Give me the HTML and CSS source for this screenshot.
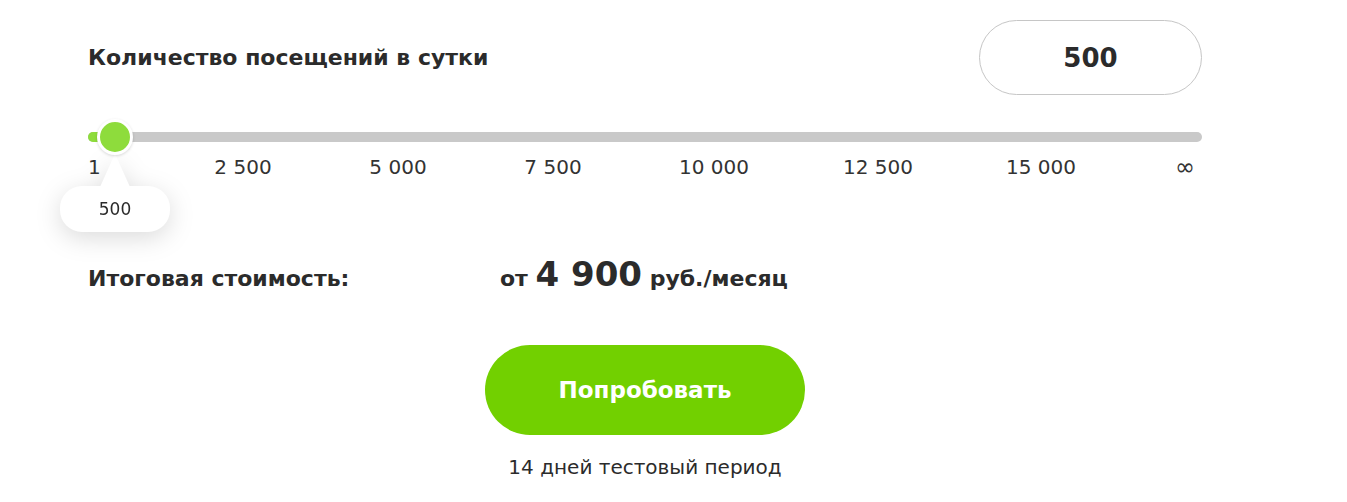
FILE: index.html
```html
<!DOCTYPE html>
<html lang="ru">
<head>
<meta charset="utf-8">
<link rel="stylesheet" href="styles.css">
</head>
<body>
<div class="calc">
  <div class="head">
    <div class="title">Количество посещений в сутки</div>
    <div class="count">500</div>
  </div>
  <div class="slider">
    <div class="track"><div class="fill" style="width:27px"></div></div>
    <div class="thumb" style="left:27px"></div>
    <div class="tip" style="left:27px">500</div>
    <div class="ticks">
      <span class="tick first">1</span>
      <span class="tick" style="left:155px">2 500</span>
      <span class="tick" style="left:310px">5 000</span>
      <span class="tick" style="left:465px">7 500</span>
      <span class="tick" style="left:626px">10 000</span>
      <span class="tick" style="left:790px">12 500</span>
      <span class="tick" style="left:953px">15 000</span>
      <span class="tick last">∞</span>
    </div>
  </div>
  <div class="total">
    <div class="total-label">Итоговая стоимость:</div>
    <div class="price">от <span class="big">4 900</span> руб./месяц</div>
  </div>
  <div class="cta">
    <button class="btn">Попробовать</button>
    <div class="trial">14 дней тестовый период</div>
  </div>
</div>
</body>
</html>
```
FILE: styles.css
```css
* { box-sizing: border-box; }
html, body { margin: 0; padding: 0; background: #fff; }
body { font-family: "DejaVu Sans", "Open Sans", sans-serif; color: #2b2b2b; }
.calc { width: 1114px; margin-left: 88px; padding-top: 20px; }
.head { display: flex; justify-content: space-between; align-items: center; height: 75px; }
.title { font-size: 22px; font-weight: 700; }
.count { width: 223px; height: 75px; border: 1px solid #c6c6c6; border-radius: 38px; display: flex; align-items: center; justify-content: center; font-size: 26px; font-weight: 700; }
.slider { position: relative; margin-top: 37px; height: 120px; }
.track { height: 10px; background: #c9c9c9; border-radius: 5px; overflow: hidden; }
.fill { height: 100%; background: #8edc3c; }
.thumb { position: absolute; top: -13px; width: 36px; height: 36px; margin-left: -18px; border-radius: 50%; background: #8edc3c; border: 3px solid #fff; box-shadow: 0 1px 3px rgba(0,0,0,0.15); z-index: 2; }
.tip { position: absolute; top: 54px; width: 110px; height: 46px; margin-left: -55px; background: #fff; border-radius: 22px; filter: drop-shadow(0 6px 12px rgba(0,0,0,0.14)); display: flex; align-items: center; justify-content: center; font-size: 17px; color: #2b2b2b; }
.tip::before { content: ""; position: absolute; top: -32px; left: 50%; margin-left: -15px; border-left: 15px solid transparent; border-right: 15px solid transparent; border-bottom: 33px solid #fff; }
.ticks { position: relative; height: 30px; margin-top: 12px; font-size: 20px; color: #333; }
.tick { position: absolute; top: 0; transform: translateX(-50%); white-space: nowrap; line-height: 26px; }
.tick.first { left: 0; transform: none; }
.tick.last { right: 7px; left: auto; transform: none; font-size: 24px; }
.total { display: flex; align-items: baseline; margin-top: 2px; height: 50px; }
.total-label { width: 412px; font-size: 22px; font-weight: 700; }
.price { font-size: 22px; font-weight: 700; }
.price .big { font-size: 34px; }
.cta { display: flex; flex-direction: column; align-items: center; margin-top: 41px; }
.btn { width: 320px; height: 90px; border: none; border-radius: 45px; background: #72d000; color: #fff; font-family: inherit; font-size: 23px; font-weight: 700; }
.trial { margin-top: 20px; font-size: 20px; color: #2b2b2b; }
```
